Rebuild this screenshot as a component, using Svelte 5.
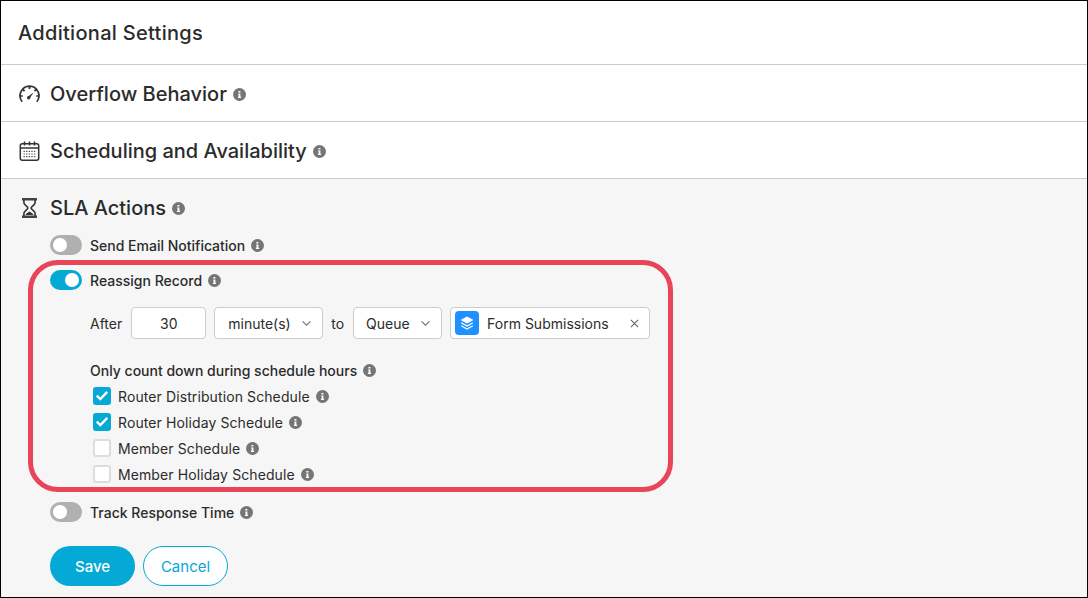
<script lang="ts">
  const schedules = [
    { label: "Router Distribution Schedule", checked: true },
    { label: "Router Holiday Schedule", checked: true },
    { label: "Member Schedule", checked: false },
    { label: "Member Holiday Schedule", checked: false },
  ];
</script>

{#snippet info()}
  <svg class="info" viewBox="0 0 13 13" aria-hidden="true">
    <circle cx="6.5" cy="6.5" r="6.5" fill="#757575" />
    <path d="M5.4 3h2v1.6h-2zM5.2 5.5h2.2v3.3h.7v1.2H4.9V8.8h.7V6.6h-.4z" fill="#fff" />
  </svg>
{/snippet}

{#snippet chevron()}
  <svg class="chevron" viewBox="0 0 12 8" aria-hidden="true">
    <path d="M1.5 1.5 6 6l4.5-4.5" fill="none" stroke="#777" stroke-width="1.3" />
  </svg>
{/snippet}

<div class="frame">
  <header class="page-title">Additional Settings</header>

  <section class="row">
    <svg class="row-icon" viewBox="0 0 21 18" aria-hidden="true">
      <path d="M3.2 16.8A9.6 9.6 0 0 1 10.5 1.2a9.6 9.6 0 0 1 7.3 15.6" fill="none" stroke="#333" stroke-width="1.7" />
      <path d="M0.8 11h3M17.2 11h3M3.6 4.2l2 2M17.4 4.2l-2 2M10.5 1v3" stroke="#333" stroke-width="1.7" />
      <path d="M8.7 11.8 14.6 7.4 10.6 13.6z" fill="#333" />
      <circle cx="9.7" cy="12.8" r="1.7" fill="#333" />
    </svg>
    <h2>Overflow Behavior</h2>
    {@render info()}
  </section>

  <section class="row">
    <svg class="row-icon" viewBox="0 0 20 20" aria-hidden="true">
      <rect x="0.8" y="2.8" width="18.4" height="16.4" rx="2" fill="none" stroke="#333" stroke-width="1.5" />
      <path d="M1 7h18" stroke="#333" stroke-width="1.5" />
      <path d="M5 0.5v4M10 0.5v4M15 0.5v4" stroke="#333" stroke-width="1.5" />
      <path d="M4 10.4h12M4 13h12M4 15.6h12" stroke="#555" stroke-width="1.2" stroke-dasharray="1.4 1.2" />
    </svg>
    <h2>Scheduling and Availability</h2>
    {@render info()}
  </section>

  <section class="sla">
    <div class="sla-head">
      <svg class="row-icon hourglass" viewBox="0 0 20 20" aria-hidden="true">
        <path d="M2.5 1.2h15M2.5 18.8h15" stroke="#444" stroke-width="2.4" />
        <path d="M4.4 2v2.8c0 2.4 4 3.6 4 5.2s-4 2.8-4 5.2V18M15.6 2v2.8c0 2.4-4 3.6-4 5.2s4 2.8 4 5.2V18" fill="none" stroke="#333" stroke-width="1.6" />
        <path d="M5.8 17c.6-1.8 3-2.8 4.2-3.6 1.2.8 3.6 1.8 4.2 3.6z" fill="#333" />
      </svg>
      <h2>SLA Actions</h2>
      {@render info()}
    </div>

    <div class="toggle-row first">
      <span class="toggle"></span>
      <span class="toggle-label">Send Email Notification</span>
      {@render info()}
    </div>

    <div class="toggle-row second">
      <span class="toggle on"></span>
      <span class="toggle-label">Reassign Record</span>
      {@render info()}
    </div>

    <div class="reassign">
      <span>After</span>
      <span class="input num">30</span>
      <span class="input select minutes">minute(s){@render chevron()}</span>
      <span>to</span>
      <span class="input select queue">Queue{@render chevron()}</span>
      <span class="input tag">
        <span class="tag-icon">
          <svg viewBox="0 0 16 16" aria-hidden="true">
            <path d="M8 1.5 14.5 5 8 8.5 1.5 5z" fill="#fff" />
            <path d="M2.2 7.8 8 11l5.8-3.2M2.2 10.8 8 14l5.8-3.2" fill="none" stroke="#fff" stroke-width="1.3" />
          </svg>
        </span>
        <span class="tag-name">Form Submissions</span>
        <svg class="close" viewBox="0 0 10 10" aria-hidden="true">
          <path d="M1 1l8 8M9 1 1 9" stroke="#666" stroke-width="1.2" />
        </svg>
      </span>
    </div>

    <div class="count-title">
      <span>Only count down during schedule hours</span>
      {@render info()}
    </div>

    <ul class="checks">
      {#each schedules as item}
        <li>
          <span class="box" class:checked={item.checked}>
            {#if item.checked}
              <svg viewBox="3 3.5 12 12" aria-hidden="true">
                <path d="M4.5 9.2 7.6 12.2 13.5 6" fill="none" stroke="#fff" stroke-width="2" />
              </svg>
            {/if}
          </span>
          <span class="check-label">{item.label}</span>
          {@render info()}
        </li>
      {/each}
    </ul>

    <div class="toggle-row last">
      <span class="toggle"></span>
      <span class="toggle-label">Track Response Time</span>
      {@render info()}
    </div>

    <div class="actions">
      <button class="save">Save</button>
      <button class="cancel">Cancel</button>
    </div>
  </section>

  <div class="highlight"></div>
</div>

<style>
  :global(body) {
    margin: 0;
  }

  .frame {
    position: relative;
    width: 1088px;
    height: 598px;
    box-sizing: border-box;
    border: 1px solid #000;
    overflow: hidden;
    background: #fff;
    color: #2b2b2b;
    font-family: Inter, "Noto Sans", sans-serif;
  }

  .page-title {
    height: 64px;
    box-sizing: border-box;
    display: flex;
    align-items: center;
    padding-left: 17px;
    font-size: 20px;
    font-weight: 500;
    letter-spacing: 0.3px;
    border-bottom: 1px solid #ccc;
  }

  .row {
    height: 57px;
    box-sizing: border-box;
    display: flex;
    align-items: center;
    padding: 2px 0 0 18px;
    border-bottom: 1px solid #ccc;
  }

  h2 {
    margin: 0 0 0 10px;
    font-size: 20px;
    font-weight: 500;
  }

  .row-icon {
    width: 21px;
    height: 20px;
    flex: none;
  }

  .info {
    width: 13px;
    height: 13px;
    flex: none;
    margin-left: 6px;
  }

  .sla {
    height: 418px;
    background: #f6f6f6;
    padding-left: 18px;
  }

  .sla-head {
    height: 56px;
    box-sizing: border-box;
    padding-top: 2px;
    display: flex;
    align-items: center;
  }

  .toggle-row {
    display: flex;
    align-items: center;
    margin-left: 31px;
    height: 20px;
    font-size: 14px;
    font-weight: 500;
  }

  .toggle-row.second {
    margin-top: 15px;
  }

  .toggle-row.last {
    margin-top: 15px;
  }

  .toggle {
    position: relative;
    width: 32px;
    height: 20px;
    border-radius: 10px;
    background: #b0b0b0;
    flex: none;
  }

  .toggle::after {
    content: "";
    position: absolute;
    left: 3px;
    top: 3px;
    width: 14px;
    height: 14px;
    border-radius: 50%;
    background: #fff;
  }

  .toggle.on {
    background: #05a9d6;
  }

  .toggle.on::after {
    left: 15px;
  }

  .toggle-label {
    margin-left: 8px;
  }

  .reassign {
    display: flex;
    align-items: center;
    margin: 17px 0 0 71px;
    font-size: 14px;
  }

  .input {
    display: flex;
    align-items: center;
    height: 32px;
    box-sizing: border-box;
    background: #fff;
    border: 1px solid #ccc;
    border-radius: 4px;
  }

  .num {
    width: 75px;
    margin-left: 9px;
    justify-content: center;
  }

  .select {
    justify-content: space-between;
    padding: 0 10px 0 13px;
  }

  .minutes {
    width: 109px;
    margin: 0 8px 0 8px;
  }

  .queue {
    width: 89px;
    margin-left: 9px;
    padding-left: 12px;
  }

  .chevron {
    width: 11px;
    height: 7px;
  }

  .tag {
    width: 200px;
    margin-left: 8px;
    padding: 0 10px 0 4px;
    gap: 8px;
  }

  .tag-icon {
    width: 24px;
    height: 24px;
    border-radius: 4px;
    background: #1e90ff;
    display: flex;
    align-items: center;
    justify-content: center;
    flex: none;
  }

  .tag-icon svg {
    width: 16px;
    height: 16px;
  }

  .tag-name {
    flex: 1;
  }

  .close {
    width: 9px;
    height: 9px;
  }

  .count-title {
    display: flex;
    align-items: center;
    margin: 21px 0 0 71px;
    height: 20px;
    font-size: 14px;
    font-weight: 500;
  }

  .checks {
    list-style: none;
    margin: 3px 0 0 74px;
    padding: 0;
    font-size: 14px;
    letter-spacing: 0.1px;
  }

  .checks li {
    display: flex;
    align-items: center;
    height: 26px;
  }

  .box {
    width: 18px;
    height: 18px;
    box-sizing: border-box;
    border: 2px solid #ddd;
    border-radius: 3px;
    background: #fff;
    flex: none;
  }

  .box.checked {
    background: #05a9d6;
    border-color: #05a9d6;
  }

  .box svg {
    display: block;
    width: 14px;
    height: 14px;
  }

  .check-label {
    margin-left: 7px;
  }

  .actions {
    display: flex;
    gap: 8px;
    margin: 24px 0 0 31px;
  }

  button {
    height: 40px;
    border-radius: 20px;
    font-family: inherit;
    font-size: 15px;
    padding: 0;
  }

  .save {
    width: 85px;
    background: #05a9d6;
    border: none;
    color: #fff;
    font-weight: 500;
  }

  .cancel {
    width: 85px;
    background: #fff;
    border: 1px solid #05a9d6;
    color: #05a9d6;
  }

  .highlight {
    position: absolute;
    left: 27px;
    top: 259px;
    width: 645px;
    height: 232px;
    box-sizing: border-box;
    border: 5px solid #e8445a;
    border-radius: 30px;
    pointer-events: none;
  }
</style>
